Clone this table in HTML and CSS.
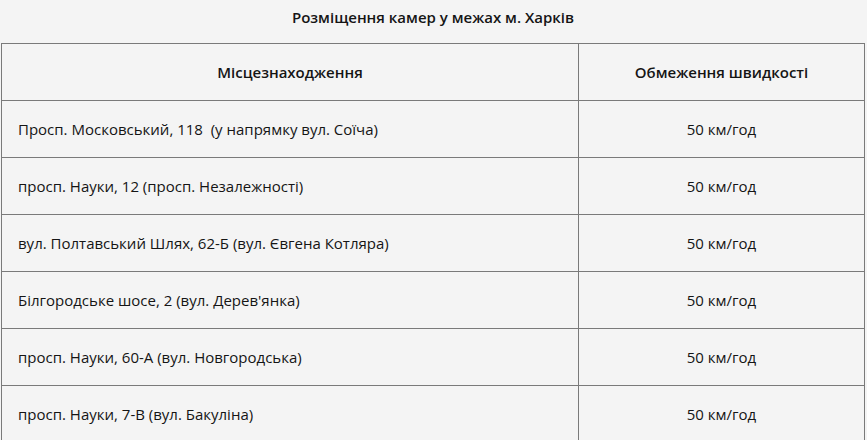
FILE: index.html
```html
<!DOCTYPE html>
<html lang="uk">
<head>
<meta charset="utf-8">
<link rel="stylesheet" href="styles.css">
</head>
<body>
<div class="wrap">
  <h3 class="title">Розміщення камер у межах м. Харків</h3>
  <table class="cams">
    <thead>
      <tr><th class="loc">Місцезнаходження</th><th class="spd">Обмеження швидкості</th></tr>
    </thead>
    <tbody>
      <tr><td class="loc">Просп. Московський, 118&nbsp; (у напрямку вул. Соїча)</td><td class="spd">50 км/год</td></tr>
      <tr><td class="loc">просп. Науки, 12 (просп. Незалежності)</td><td class="spd">50 км/год</td></tr>
      <tr><td class="loc">вул. Полтавський Шлях, 62-Б (вул. Євгена Котляра)</td><td class="spd">50 км/год</td></tr>
      <tr><td class="loc">Білгородське шосе, 2 (вул. Дерев'янка)</td><td class="spd">50 км/год</td></tr>
      <tr><td class="loc">просп. Науки, 60-А (вул. Новгородська)</td><td class="spd">50 км/год</td></tr>
      <tr><td class="loc">просп. Науки, 7-В (вул. Бакуліна)</td><td class="spd">50 км/год</td></tr>
    </tbody>
  </table>
</div>
</body>
</html>
```
FILE: styles.css
```css
html, body {
  margin: 0;
  padding: 0;
  background: #f4f4f4;
}
body {
  font-family: "Open Sans", "Noto Sans", sans-serif;
  font-size: 15px;
  color: #151515;
}
.wrap {
  width: 864px;
  padding-left: 1px;
}
.title {
  margin: 0;
  height: 43px;
  line-height: 34px;
  text-align: center;
  font-size: 15px;
  font-weight: 600;
}
.cams {
  width: 864px;
  border-collapse: collapse;
}
.cams th, .cams td {
  border: 1px solid #7a7a7a;
  height: 57px;
  padding: 0 16px;
  box-sizing: border-box;
  vertical-align: middle;
}
.cams th {
  font-weight: 600;
  text-align: center;
}
.cams th.loc { width: 577px; }
.cams td.loc { text-align: left; }
.cams td.spd { text-align: center; }
```
